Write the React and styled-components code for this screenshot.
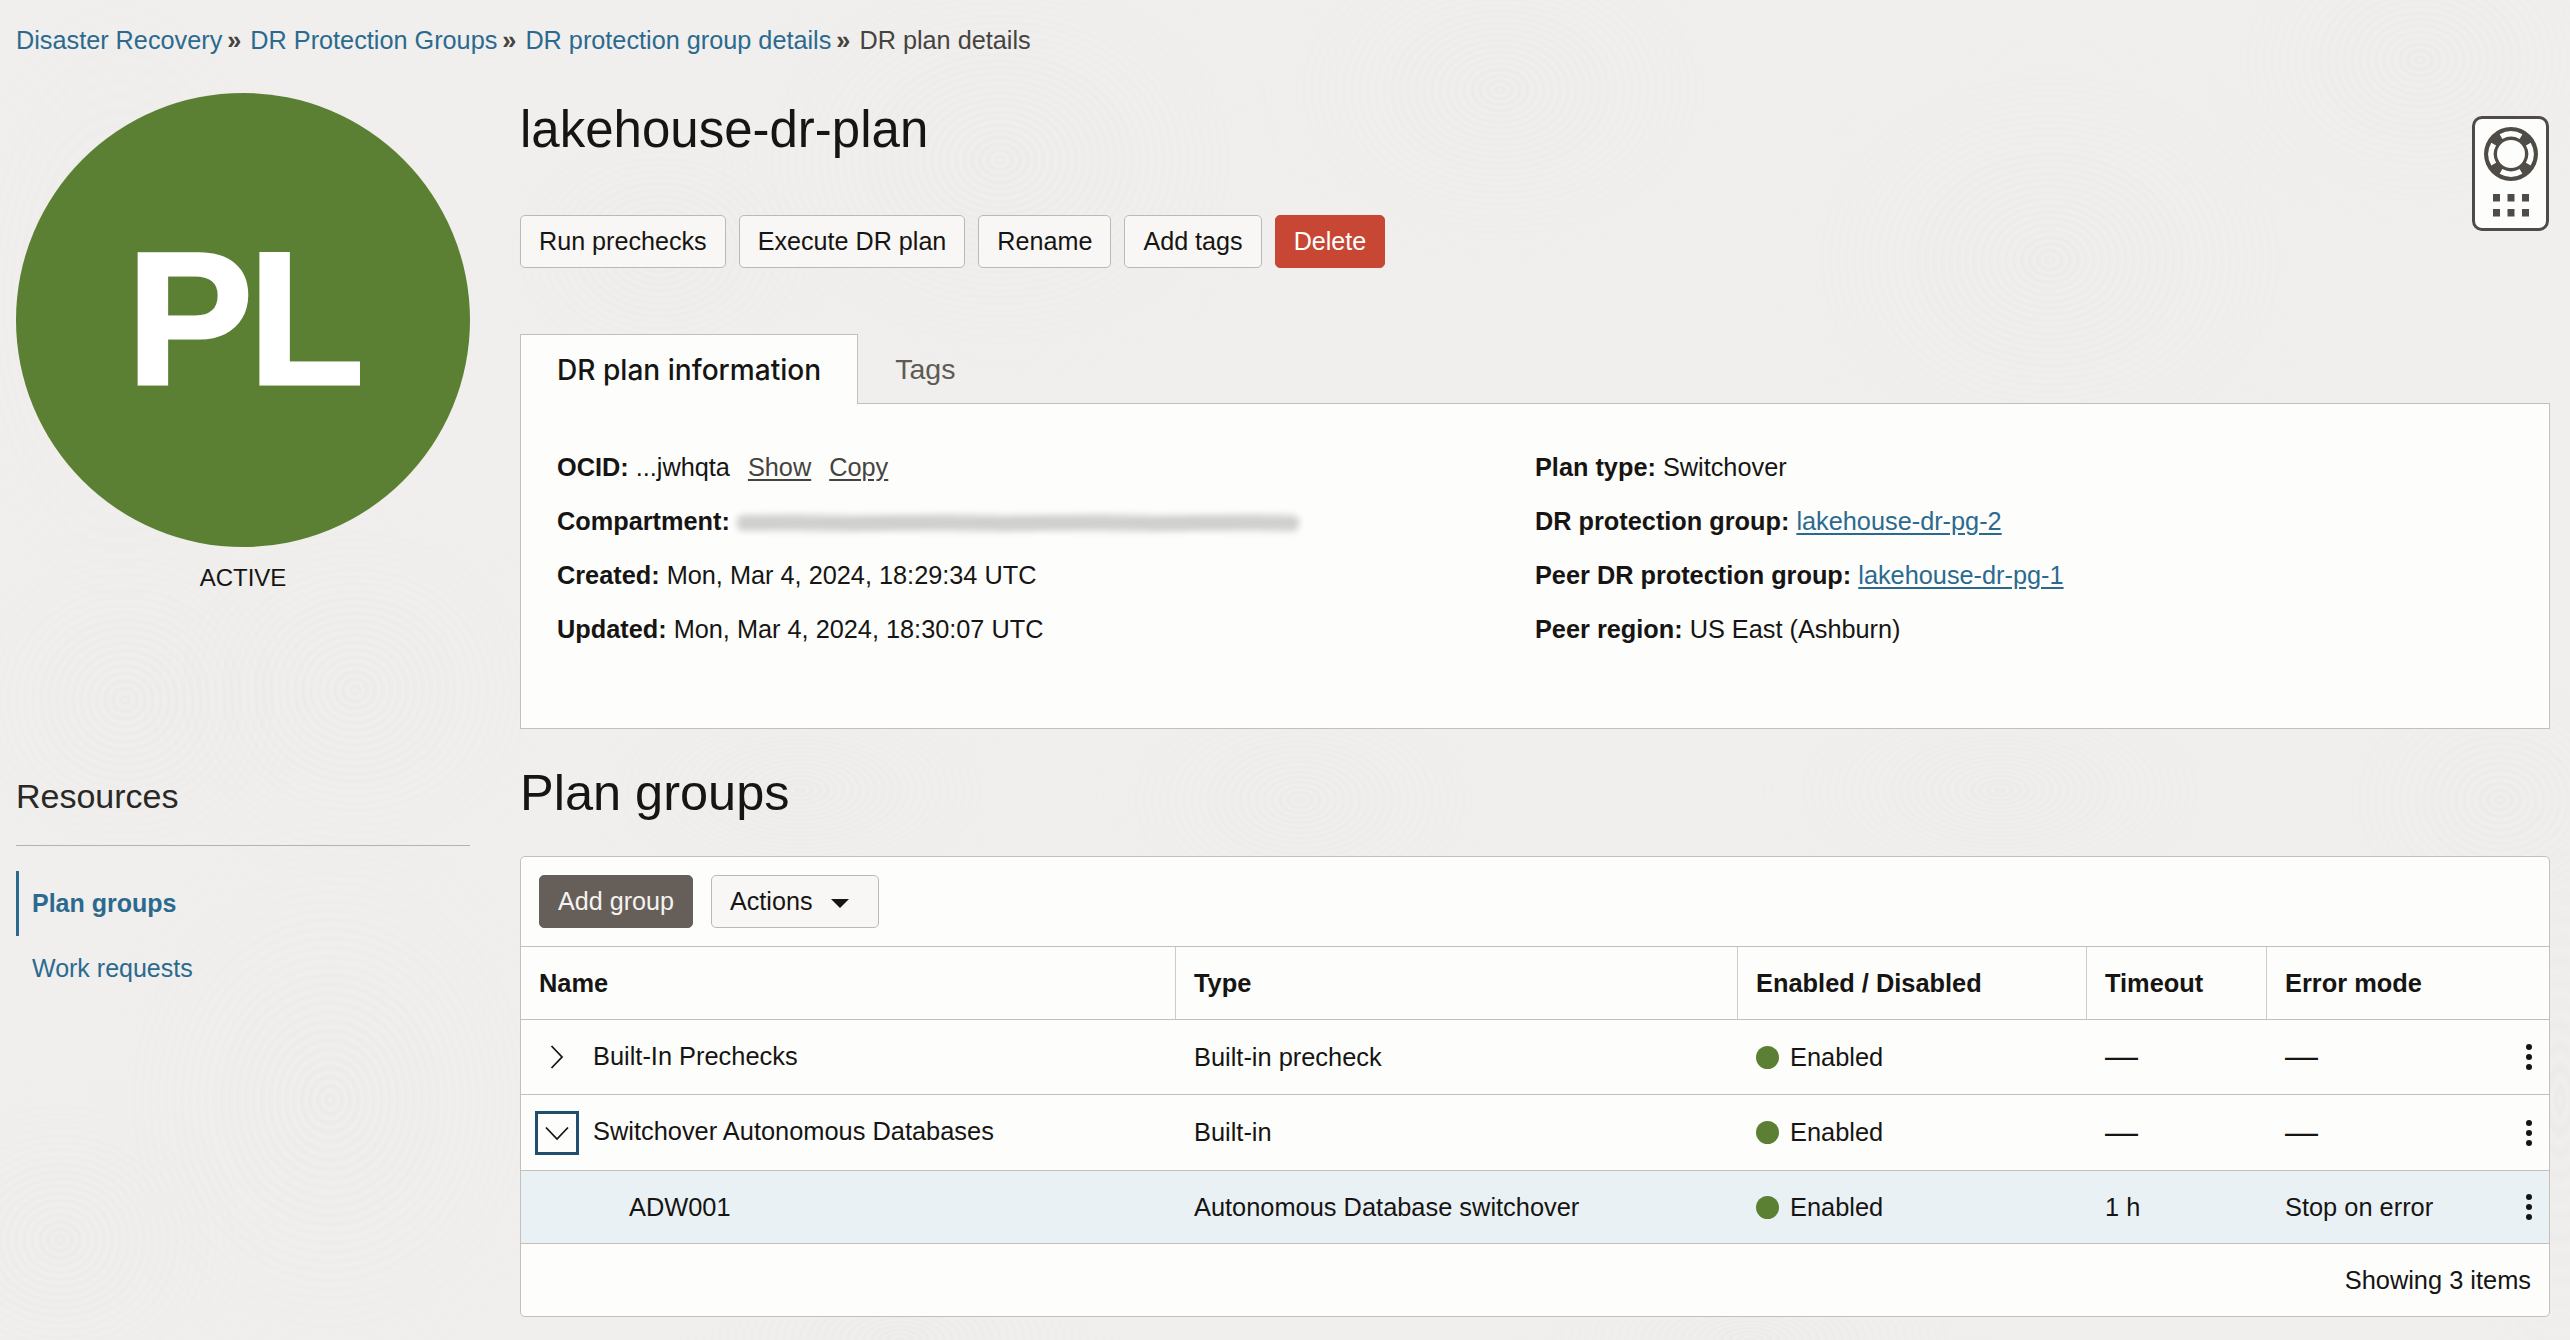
import React from 'react';
import styled, { createGlobalStyle, css } from 'styled-components';

// rings for the faint fingerprint texture of the page background, fading outwards
const rings = (x, y, rx, ry, step = 8) => {
  const stops = [];
  for (let r = 0; r < 100; r += (step / rx) * 100) {
    const alpha = (0.024 * (1 - r / 100)).toFixed(4);
    const w = (step / rx) * 100;
    stops.push(`rgba(60,50,40,0) ${r.toFixed(2)}%`);
    stops.push(`rgba(60,50,40,${alpha}) ${(r + w / 2).toFixed(2)}%`);
    stops.push(`rgba(60,50,40,0) ${(r + w).toFixed(2)}%`);
  }
  return `radial-gradient(ellipse ${rx}px ${ry}px at ${x}px ${y}px, ${stops.join(', ')}, transparent 100%)`;
};

const texture = [
  [125, 700, 200, 190],
  [355, 690, 230, 210],
  [330, 1100, 260, 300],
  [60, 1240, 200, 180],
  [1000, 160, 300, 240],
  [1500, 90, 260, 190],
  [660, 250, 190, 150],
  [2050, 260, 300, 240],
  [2420, 60, 230, 180],
  [1300, 800, 220, 140],
  [2000, 790, 260, 130],
  [800, 790, 240, 120],
  [900, 1340, 240, 120],
  [1750, 1340, 260, 110],
  [2500, 800, 180, 150],
  [120, 300, 170, 320],
  [2560, 1100, 120, 320],
]
  .map(([x, y, rx, ry]) => rings(x, y, rx, ry))
  .join(', ');

const GlobalStyle = createGlobalStyle`
  * { box-sizing: border-box; }
  html, body { margin: 0; padding: 0; }
  body {
    width: 2570px;
    height: 1340px;
    overflow: hidden;
    background-color: #f0efed;
    background-image: ${texture};
    color: #161513;
    font-family: "Liberation Sans", Arial, sans-serif;
    font-size: 25px;
  }
`;

const Page = styled.div`
  position: relative;
  width: 2570px;
  height: 1340px;
  padding: 24px 20px 0 16px;
`;

const Breadcrumb = styled.nav`
  display: flex;
  height: 32px;
  margin-bottom: 37px;
  font-size: 25.25px;
  line-height: 32px;
  color: #46433f;
`;

const CrumbLink = styled.a`
  color: #2b6a8e;
`;

const CrumbSep = styled.span`
  margin: 0 9px 0 5px;
  font-weight: 700;
  color: #46433f;
`;

const Columns = styled.div`
  display: grid;
  grid-template-columns: 454px 2030px;
  column-gap: 50px;
`;

const Sidebar = styled.aside`
  display: flex;
  flex-direction: column;
`;

const Avatar = styled.div`
  display: flex;
  align-items: center;
  justify-content: center;
  width: 454px;
  height: 454px;
  padding-bottom: 4px;
  border-radius: 50%;
  background: #5c8033;
  color: #fff;
  font-size: 190px;
  font-weight: 700;
  letter-spacing: -5px;
  -webkit-text-stroke: 3px #fff;
`;

const StateLabel = styled.div`
  margin-top: 16px;
  font-size: 24px;
  line-height: 30px;
  text-align: center;
`;

const ResourcesTitle = styled.h3`
  margin: 181px 0 0;
  padding-bottom: 27px;
  border-bottom: 1px solid #b9b1aa;
  color: #2a2826;
  font-size: 34px;
  font-weight: 400;
  line-height: 44px;
`;

const ResourceNav = styled.div`
  display: flex;
  flex-direction: column;
  margin-top: 25px;
`;

const ResourceItem = styled.a`
  height: 65px;
  padding-left: 13px;
  border-left: 3px solid ${({ $active }) => ($active ? '#2b6a8e' : 'transparent')};
  color: #2b6a8e;
  font-size: 25px;
  font-weight: ${({ $active }) => ($active ? 700 : 400)};
  line-height: 65px;
`;

const Main = styled.main`
  display: flex;
  flex-direction: column;
  padding-top: 7px;
`;

const Title = styled.h1`
  margin: 0;
  font-size: 51px;
  font-weight: 400;
  line-height: 60px;
`;

const ButtonRow = styled.div`
  display: flex;
  gap: 13px;
  margin-top: 55px;
`;

const Button = styled.button`
  height: 53px;
  padding: 0 18px;
  border: 1px solid #bdb8b3;
  border-radius: 5px;
  background: #f8f7f5;
  color: #161513;
  font-family: inherit;
  font-size: 25.15px;
  line-height: 51px;

  ${({ $variant }) =>
    $variant === 'danger' &&
    css`
      border-color: #c74634;
      background: #c74634;
      color: #fff;
    `}

  ${({ $variant }) =>
    $variant === 'primary' &&
    css`
      border-color: #665f59;
      background: #665f59;
      color: #f5f3ef;
    `}
`;

const Tabs = styled.div`
  position: relative;
  z-index: 1;
  display: flex;
  margin-top: 66px;
  margin-bottom: -1px;
`;

const Tab = styled.div`
  height: 70px;
  padding: 0 36px;
  border: 1px solid ${({ $active }) => ($active ? '#c4bfba' : 'transparent')};
  border-bottom: 0;
  background: ${({ $active }) => ($active ? '#fdfdfb' : 'transparent')};
  color: ${({ $active }) => ($active ? '#161513' : '#5f5a55')};
  font-family: ${({ $active }) => ($active ? 'Inter, "Liberation Sans"' : '"Liberation Sans"')}, sans-serif;
  font-size: ${({ $active }) => ($active ? 28.1 : 28.5)}px;
  font-weight: ${({ $active }) => ($active ? 500 : 400)};
  line-height: ${({ $active }) => ($active ? 70 : 68)}px;
`;

const InfoPanel = styled.section`
  display: grid;
  grid-template-columns: 978px 1fr;
  height: 326px;
  padding: 36px 0 0 36px;
  border: 1px solid #c4bfba;
  background: #fdfdfb;
`;

const InfoColumn = styled.div`
  display: flex;
  flex-direction: column;
`;

const InfoRow = styled.div`
  height: 54px;
  font-size: 25.3px;
  line-height: 54px;
  white-space: pre;
`;

const InfoLabel = styled.b`
  font-weight: 700;
`;

const PlainLink = styled.a`
  margin-left: 18px;
  color: #46433f;
  text-decoration: underline;
  text-underline-offset: 3px;
`;

const ValueLink = styled.a`
  color: #2b6a8e;
  text-decoration: underline;
  text-underline-offset: 3px;
`;

const Redacted = styled.span`
  display: inline-block;
  width: 562px;
  height: 16px;
  margin-left: 7px;
  vertical-align: -1px;
  border-radius: 6px;
  background: repeating-linear-gradient(177deg, #d4d4d3 0 3px, #c2c2c1 3px 6px, #dededd 6px 8px);
  filter: blur(3px);
`;

const SectionTitle = styled.h2`
  margin: 34px 0 33px;
  font-size: 50.5px;
  font-weight: 400;
  line-height: 60px;
`;

const TableCard = styled.section`
  height: 461px;
  border: 1px solid #c4bfba;
  border-radius: 5px;
  background: #fdfdfb;
  font-size: 25.4px;
  overflow: hidden;
`;

const Toolbar = styled.div`
  display: flex;
  gap: 18px;
  height: 89px;
  padding: 18px 18px 0;
`;

const Caret = styled.span`
  display: inline-block;
  width: 0;
  height: 0;
  margin: 0 11px 0 19px;
  border-top: 9px solid #161513;
  border-left: 9px solid transparent;
  border-right: 9px solid transparent;
  vertical-align: 2px;
`;

const Row = styled.div`
  display: grid;
  grid-template-columns: 654px 562px 349px 180px 1fr;
  align-items: center;
  height: ${({ $height }) => $height}px;
  border-top: 1px solid #c4bfba;
  background: ${({ $selected }) => ($selected ? '#e9f1f5' : 'transparent')};
`;

const HeadCell = styled.div`
  display: flex;
  align-items: center;
  height: 100%;
  padding-left: ${({ $first }) => ($first ? 17 : 18)}px;
  border-left: 1px solid ${({ $first }) => ($first ? 'transparent' : '#cfcbc7')};
  font-weight: 700;
`;

const Cell = styled.div`
  display: flex;
  align-items: center;
  height: 100%;
  padding-left: 19px;
`;

const ExpandButton = styled.span`
  display: flex;
  align-items: center;
  justify-content: center;
  flex: none;
  width: 44px;
  height: 44px;
  margin-left: -5px;
  margin-right: 14px;
  border: 3px solid ${({ $focused }) => ($focused ? '#1f4e6e' : 'transparent')};
`;

const NameText = styled.span`
  margin-top: ${({ $indent }) => ($indent ? '0' : '-2px')};
  margin-left: ${({ $indent }) => ($indent ? '89px' : '0')};
`;

const StatusDot = styled.span`
  flex: none;
  width: 23px;
  height: 23px;
  margin-right: 11px;
  border-radius: 50%;
  background: #5c8033;
`;

const Dash = styled.span`
  margin-top: -3px;
  font-size: 33px;
  line-height: 33px;
`;

const LastCell = styled(Cell)`
  justify-content: space-between;
  padding-right: 17px;
`;

const Footer = styled.div`
  display: flex;
  align-items: center;
  justify-content: flex-end;
  height: 73px;
  padding-right: 18px;
  border-top: 1px solid #c4bfba;
`;

const HelpWidget = styled.div`
  position: absolute;
  top: 116px;
  right: 21px;
  display: flex;
  flex-direction: column;
  align-items: center;
  width: 77px;
  height: 115px;
  padding-top: 8px;
  border: 3px solid #4f4c47;
  border-radius: 10px;
  background: #fdfdfb;
`;

const Chevron = ({ down }) => (
  <svg width="24" height="24" viewBox="0 0 24 24" fill="none" stroke="#161513" strokeWidth="1.8">
    <path d={down ? 'M1 6.5 12 18 23 6.5' : 'M6.5 1 17 12 6.5 23'} />
  </svg>
);

const Kebab = () => (
  <svg width="6" height="26" viewBox="0 0 6 26" fill="#161513">
    <circle cx="3" cy="3" r="3" />
    <circle cx="3" cy="13" r="3" />
    <circle cx="3" cy="23" r="3" />
  </svg>
);

const HelpIcon = () => (
  <svg width="54" height="54" viewBox="-27 -27 54 54">
    <circle r="27" fill="#4f4c47" />
    <g fill="none" stroke="#fdfdfb" strokeWidth="5.5">
      <path d="M-10 -17.3A20 20 0 0 1 10 -17.3" />
      <path d="M17.3 -10A20 20 0 0 1 17.3 10" />
      <path d="M10 17.3A20 20 0 0 1 -10 17.3" />
      <path d="M-17.3 10A20 20 0 0 1 -17.3 -10" />
    </g>
    <circle r="14" fill="#fdfdfb" />
  </svg>
);

const AppsIcon = () => (
  <svg width="36" height="23" viewBox="0 0 36 23" fill="#4f4c47" style={{ marginTop: 13 }}>
    {[0, 15].map((y) =>
      [0, 14.5, 29].map((x) => <rect key={`${x}-${y}`} x={x} y={y} width="7" height="7.5" />),
    )}
  </svg>
);

const crumbs = ['Disaster Recovery', 'DR Protection Groups', 'DR protection group details'];
const actions = ['Run prechecks', 'Execute DR plan', 'Rename', 'Add tags'];
const columns = ['Name', 'Type', 'Enabled / Disabled', 'Timeout', 'Error mode'];

const rows = [
  { name: 'Built-In Prechecks', type: 'Built-in precheck', height: 75, expand: 'closed' },
  { name: 'Switchover Autonomous Databases', type: 'Built-in', height: 76, expand: 'open' },
  {
    name: 'ADW001',
    type: 'Autonomous Database switchover',
    height: 73,
    timeout: '1 h',
    mode: 'Stop on error',
    selected: true,
  },
];

const App = () => (
  <Page>
    <GlobalStyle />
    <Breadcrumb>
      {crumbs.map((crumb) => (
        <React.Fragment key={crumb}>
          <CrumbLink>{crumb}</CrumbLink>
          <CrumbSep>»</CrumbSep>
        </React.Fragment>
      ))}
      <span>DR plan details</span>
    </Breadcrumb>

    <Columns>
      <Sidebar>
        <Avatar>PL</Avatar>
        <StateLabel>ACTIVE</StateLabel>
        <ResourcesTitle>Resources</ResourcesTitle>
        <ResourceNav>
          <ResourceItem $active>Plan groups</ResourceItem>
          <ResourceItem>Work requests</ResourceItem>
        </ResourceNav>
      </Sidebar>

      <Main>
        <Title>lakehouse-dr-plan</Title>
        <ButtonRow>
          {actions.map((action) => (
            <Button key={action}>{action}</Button>
          ))}
          <Button $variant="danger">Delete</Button>
        </ButtonRow>

        <Tabs>
          <Tab $active>DR plan information</Tab>
          <Tab>Tags</Tab>
        </Tabs>
        <InfoPanel>
          <InfoColumn>
            <InfoRow>
              <InfoLabel>OCID:</InfoLabel> ...jwhqta
              <PlainLink>Show</PlainLink>
              <PlainLink>Copy</PlainLink>
            </InfoRow>
            <InfoRow>
              <InfoLabel>Compartment:</InfoLabel>
              <Redacted />
            </InfoRow>
            <InfoRow>
              <InfoLabel>Created:</InfoLabel> Mon, Mar 4, 2024, 18:29:34 UTC
            </InfoRow>
            <InfoRow>
              <InfoLabel>Updated:</InfoLabel> Mon, Mar 4, 2024, 18:30:07 UTC
            </InfoRow>
          </InfoColumn>
          <InfoColumn>
            <InfoRow>
              <InfoLabel>Plan type:</InfoLabel> Switchover
            </InfoRow>
            <InfoRow>
              <InfoLabel>DR protection group:</InfoLabel> <ValueLink>lakehouse-dr-pg-2</ValueLink>
            </InfoRow>
            <InfoRow>
              <InfoLabel>Peer DR protection group:</InfoLabel> <ValueLink>lakehouse-dr-pg-1</ValueLink>
            </InfoRow>
            <InfoRow>
              <InfoLabel>Peer region:</InfoLabel> US East (Ashburn)
            </InfoRow>
          </InfoColumn>
        </InfoPanel>

        <SectionTitle>Plan groups</SectionTitle>
        <TableCard>
          <Toolbar>
            <Button $variant="primary">Add group</Button>
            <Button>
              Actions
              <Caret />
            </Button>
          </Toolbar>
          <Row $height={73}>
            {columns.map((column, i) => (
              <HeadCell key={column} $first={i === 0}>
                {column}
              </HeadCell>
            ))}
          </Row>
          {rows.map((row) => (
            <Row key={row.name} $height={row.height} $selected={row.selected}>
              <Cell>
                {row.expand && (
                  <ExpandButton $focused={row.expand === 'open'}>
                    <Chevron down={row.expand === 'open'} />
                  </ExpandButton>
                )}
                <NameText $indent={!row.expand}>{row.name}</NameText>
              </Cell>
              <Cell>{row.type}</Cell>
              <Cell>
                <StatusDot />
                Enabled
              </Cell>
              <Cell>{row.timeout || <Dash>—</Dash>}</Cell>
              <LastCell>
                {row.mode || <Dash>—</Dash>}
                <Kebab />
              </LastCell>
            </Row>
          ))}
          <Footer>Showing 3 items</Footer>
        </TableCard>
      </Main>
    </Columns>

    <HelpWidget>
      <HelpIcon />
      <AppsIcon />
    </HelpWidget>
  </Page>
);

export default App;
